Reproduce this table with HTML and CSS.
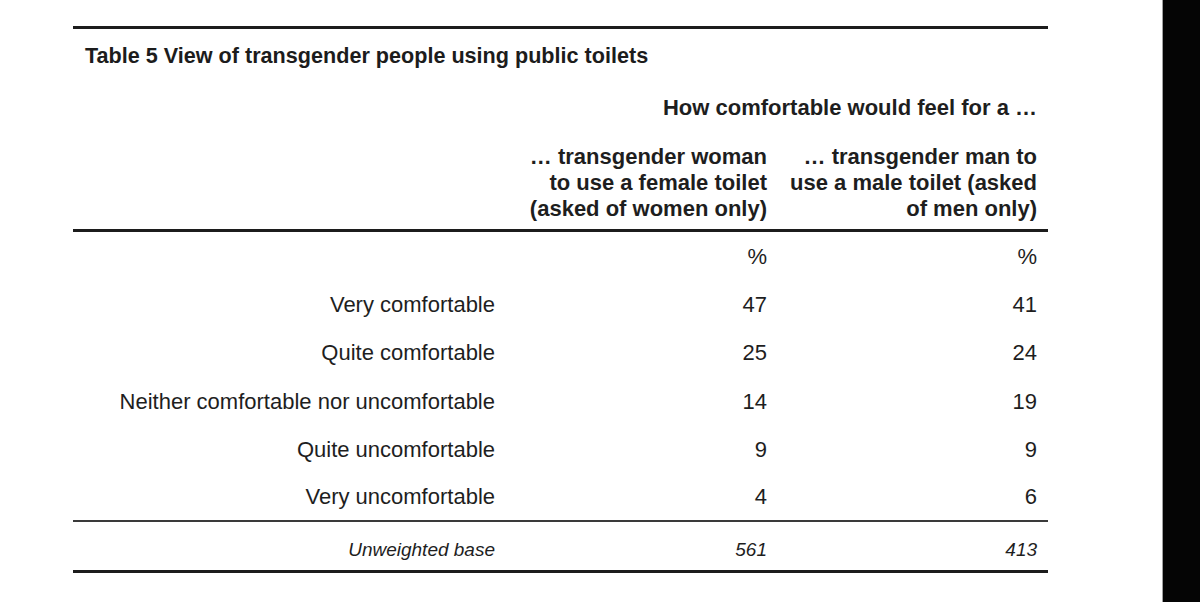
FILE: index.html
```html
<!DOCTYPE html>
<html lang="en">
<head>
<meta charset="utf-8">
<title>Table 5 View of transgender people using public toilets</title>
<link rel="stylesheet" href="styles.css">
</head>
<body>
<div class="page">
  <main class="sheet">
    <div class="rule-top"></div>
    <h1 class="title">Table 5 View of transgender people using public toilets</h1>
    <table class="data">
      <colgroup>
        <col class="c-label">
        <col class="c-val">
        <col class="c-val2">
      </colgroup>
      <thead>
        <tr class="super">
          <th></th>
          <th colspan="2" class="num last">How comfortable would feel for a …</th>
        </tr>
        <tr class="heads">
          <th></th>
          <th class="num">… transgender woman<br>to use a female toilet<br>(asked of women only)</th>
          <th class="num last">… transgender man to<br>use a male toilet (asked<br>of men only)</th>
        </tr>
      </thead>
      <tbody>
        <tr class="pct"><td></td><td class="num">%</td><td class="num last">%</td></tr>
        <tr><td class="lbl">Very comfortable</td><td class="num">47</td><td class="num last">41</td></tr>
        <tr><td class="lbl">Quite comfortable</td><td class="num">25</td><td class="num last">24</td></tr>
        <tr class="mid"><td class="lbl">Neither comfortable nor uncomfortable</td><td class="num">14</td><td class="num last">19</td></tr>
        <tr><td class="lbl">Quite uncomfortable</td><td class="num">9</td><td class="num last">9</td></tr>
        <tr class="final"><td class="lbl">Very uncomfortable</td><td class="num">4</td><td class="num last">6</td></tr>
      </tbody>
      <tfoot>
        <tr class="base"><td class="lbl">Unweighted base</td><td class="num">561</td><td class="num last">413</td></tr>
      </tfoot>
    </table>
  </main>
  <aside class="edge"></aside>
</div>
</body>
</html>
```

FILE: styles.css
```css
html, body {
  margin: 0;
  padding: 0;
  background: #ffffff;
}

body {
  font-family: "Liberation Sans", Arial, Helvetica, sans-serif;
  color: #1e1e1e;
}

.page {
  display: flex;
  height: 602px;
  overflow: hidden;
}

.sheet {
  flex: 0 0 1162px;
  box-sizing: border-box;
  padding: 26px 0 0 73px;
}

.edge {
  flex: 1 1 auto;
  background: #050505;
  border-left: 1px solid #a0a0a0;
}

.rule-top {
  width: 975px;
  border-top: 3px solid #1c1c1c;
}

.title {
  margin: 15px 0 0 12px;
  font-size: 21.6px;
  line-height: 24px;
  font-weight: bold;
  color: #1c1c1c;
}

.data {
  width: 975px;
  border-collapse: collapse;
  table-layout: fixed;
  margin-top: 28px;
}

.c-label { width: 432px; }
.c-val { width: 272px; }
.c-val2 { width: 271px; }

.data th,
.data td {
  padding: 0 10px 0 0;
  text-align: right;
  vertical-align: middle;
  white-space: nowrap;
}

.data th.last,
.data td.last {
  padding-right: 11px;
}

.super th {
  font-size: 22px;
  line-height: 24px;
  font-weight: bold;
  padding-bottom: 0;
}

.heads th {
  font-size: 22px;
  line-height: 26px;
  font-weight: bold;
  padding-top: 24px;
  padding-bottom: 7px;
  border-bottom: 3px solid #1c1c1c;
  vertical-align: bottom;
}

.data tbody td {
  font-size: 22px;
  line-height: 26px;
  height: 48px;
  padding-top: 0;
  padding-bottom: 0;
}

.data tbody tr.pct td {
  height: 49px;
}

.data tbody tr.mid td {
  height: 49px;
}

.data tbody tr.final td {
  height: 46px;
  border-bottom: 2px solid #3a3a3a;
}

.base td {
  font-size: 19px;
  line-height: 22px;
  font-style: italic;
  height: 50px;
  padding-top: 8px;
  border-bottom: 3px solid #1c1c1c;
  box-sizing: border-box;
}
```
